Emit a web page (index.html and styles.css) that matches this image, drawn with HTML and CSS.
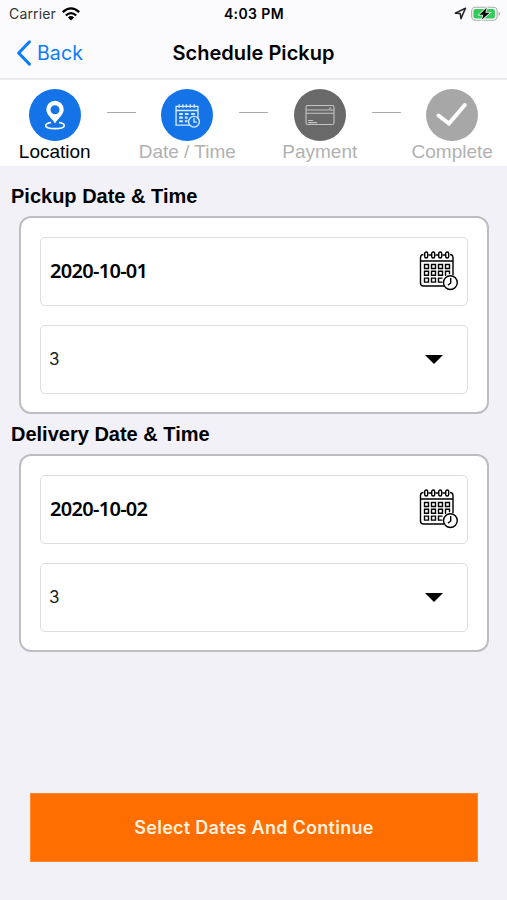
FILE: index.html
```html
<!DOCTYPE html>
<html lang="en">
<head>
<meta charset="utf-8">
<title>Schedule Pickup</title>
<link rel="stylesheet" href="styles.css">
</head>
<body>
<svg width="0" height="0" class="defs" aria-hidden="true">
  <symbol id="calendar" viewBox="0 0 40 40">
    <g fill="none" stroke="currentColor" stroke-width="1.4">
      <path d="M25 35H4.5Q1.5 35 1.5 32V6.5Q1.5 3.5 4.5 3.5M31 3.5Q34 3.5 34 6.5V24M1.5 10H34M9.5 4H12M16.5 4H19M23.5 4H26"/>
      <rect x="5.7" y="1" width="3" height="6" rx="1.5"/><rect x="12.7" y="1" width="3" height="6" rx="1.5"/><rect x="19.7" y="1" width="3" height="6" rx="1.5"/><rect x="26.7" y="1" width="3" height="6" rx="1.5"/>
      <path d="M5.5 13.5h4v4h-4zM12.5 13.5h4v4h-4zM19.5 13.5h4v4h-4zM26.5 13.5h4v4h-4zM5.5 20.3h4v4h-4zM12.5 20.3h4v4h-4zM19.5 20.3h4v4h-4zM26 24.3h.5v-4h4v3M5.5 27.1h4v4h-4zM12.5 27.1h4v4h-4zM23.5 31.1h-4v-4h4"/>
      <circle cx="31.4" cy="31.6" r="6.9"/><path d="M31.7 27v5l-2.8 2.3"/>
    </g>
  </symbol>
</svg>
<header class="header">
  <div class="status">
    <div class="status-left"><span class="carrier">Carrier</span>
      <svg class="wifi" viewBox="0 0 18 14"><g fill="none" stroke="#000" stroke-width="2.3"><path d="M.8 5.2Q9-2.4 17.2 5.2"/><path d="M3.8 8.5Q9 3.8 14.2 8.5"/></g><path d="M5.9 10.4Q9 7.8 12.1 10.4L9 13.5z"/></svg>
    </div>
    <span class="clock">4:03 PM</span>
    <div class="status-right">
      <svg class="arrow" viewBox="0 0 12 12"><path d="M1.2 5.7L10.6 1.2 6.4 10.7 5.8 6.1z" fill="none" stroke="#222" stroke-width="1.4" stroke-linejoin="round"/></svg>
      <svg class="battery" viewBox="0 0 30 16"><rect x=".7" y="1.2" width="25.4" height="13" rx="3.8" fill="#fff" stroke="#aaa" stroke-width="1.1"/><rect x="2.4" y="2.9" width="21.5" height="9.6" rx="2" fill="#35cb5a"/><path d="M27.6 5.4q3 2.3 0 4.6z" fill="#aaa"/><path d="M15.6 1.8L8.4 8.7h3.9L11 13.6 18.6 6.7h-4.2z" fill="#000" stroke="#e8f8ec" stroke-width="1.6" paint-order="stroke"/></svg>
    </div>
  </div>
  <nav class="nav">
    <a class="back"><svg class="chevron" viewBox="0 0 16 26"><path d="M13.3 2L2.7 13l10.6 11" fill="none" stroke="#0a7cff" stroke-width="3.2" stroke-linecap="round" stroke-linejoin="round"/></svg><span>Back</span></a>
    <h1 class="title">Schedule Pickup</h1>
  </nav>
</header>
<section class="steps">
  <div class="step current"><div class="disc blue"><svg viewBox="0 0 52 52"><path fill="#fff" fill-rule="evenodd" d="M26 11.8a8.7 8.7 0 0 0-8.7 8.7C17.3 26 24 30.3 26 34.5c2-4.2 8.7-8.5 8.7-14A8.7 8.7 0 0 0 26 11.8zM26 16.3a4.5 4.5 0 1 1 0 9 4.5 4.5 0 0 1 0-9z"/><path d="M22 33.5c-3 .5-5.3 1.5-5.3 3 0 4.2 18.6 4.2 18.6 0 0-1.5-2.3-2.5-5.3-3" fill="none" stroke="#fff" stroke-width="1.7"/></svg></div><span class="label">Location</span></div>
  <i class="link"></i>
  <div class="step"><div class="disc blue"><svg class="mini" viewBox="0 0 24 24"><g fill="none" stroke="#d8ebff" stroke-width="1.3"><path d="M14 21.2H1V3.2H22V15M1 7.2H22M4 1.2V4.5M7.5 1.2V4.5M11 1.2V4.5M14.7 1.2V4.5M18.5 1.2V4.5"/><path d="M4 10.5H7.5M9.5 10.5H13M15.5 10.5H19M4 14H7.5M9.5 14H12M4 17.5H7.5M9.5 17.5H12" stroke-width="2"/><circle cx="18.2" cy="18" r="5.2"/><path d="M18.2 14.5V18.3H21"/></g></svg></div><span class="label">Date / Time</span></div>
  <i class="link"></i>
  <div class="step"><div class="disc dark"><svg viewBox="0 0 52 52"><g fill="none" stroke="#c4c4c4" stroke-width="1.1"><rect x="12" y="16.5" width="28" height="19" rx="1.8"/><path d="M12 21H40M12 24.3H40M14 31.5h5M14 33.6h9M35 19.8l2-1"/></g></svg></div><span class="label">Payment</span></div>
  <i class="link"></i>
  <div class="step"><div class="disc light"><svg viewBox="0 0 52 52"><path d="M12.5 26.5L23 34.5 38.8 16" fill="none" stroke="#fff" stroke-width="4" stroke-linecap="round"/></svg></div><span class="label">Complete</span></div>
</section>
<main class="content">
  <h2 class="heading">Pickup Date &amp; Time</h2>
  <section class="card">
    <div class="field"><span class="date">2020-10-01</span><svg class="calendar"><use href="#calendar"/></svg></div>
    <div class="field select"><span class="value">3</span><i class="caret"></i></div>
  </section>
  <h2 class="heading delivery">Delivery Date &amp; Time</h2>
  <section class="card">
    <div class="field"><span class="date">2020-10-02</span><svg class="calendar"><use href="#calendar"/></svg></div>
    <div class="field select"><span class="value">3</span><i class="caret"></i></div>
  </section>
  <button class="continue">Select Dates And Continue</button>
</main>
</body>
</html>
```
FILE: styles.css
```css
* { box-sizing: border-box; }
body { margin: 0; width: 507px; height: 900px; overflow: hidden; background: #f2f1f7; color: #000; font-family: Inter, sans-serif; display: flex; flex-direction: column; }
svg { display: block; flex: none; }
.defs { position: absolute; }
.header { height: 80px; background: #fbfbfd; border-bottom: 2px solid #ececef; }
.status { height: 27px; display: grid; grid-template-columns: 1fr auto 1fr; align-items: center; padding: 0 6px 0 8px; }
.status-left, .status-right { display: flex; align-items: center; }
.status-left { gap: 6px; padding-left: 1px; }
.carrier { font-size: 14px; line-height: 20px; letter-spacing: .15px; color: #333; }
.wifi { width: 18px; height: 14px; }
.clock { font-size: 14px; font-weight: 600; line-height: 20px; letter-spacing: .4px; margin-right: 1px; }
.status-right { justify-content: flex-end; gap: 4px; }
.arrow { width: 13px; height: 13px; }
.battery { width: 30px; height: 16px; }
.nav { height: 51px; display: grid; grid-template-columns: 1fr auto 1fr; align-items: center; padding: 0 16px; }
.back { display: flex; align-items: center; gap: 5px; color: #0a7cff; font-size: 19.5px; letter-spacing: .1px; }
.chevron { width: 16px; height: 26px; }
.title { margin: 0; font-size: 20px; font-weight: 600; letter-spacing: .05px; }
.steps { height: 86px; background: #fff; display: flex; padding: 9px 2px 0; }
.step { width: 105.5px; flex: none; display: flex; flex-direction: column; align-items: center; color: #b1b1b1; }
.current { color: #000; }
.disc { width: 52px; height: 52px; border-radius: 50%; display: flex; align-items: center; justify-content: center; }
.disc svg { width: 52px; height: 52px; }
.disc .mini { width: 25px; height: 25px; }
.blue { background: #1473e6; }
.dark { background: #696969; }
.light { background: #a7a7a7; }
.label { font: 19px/22px "Liberation Sans", sans-serif; white-space: nowrap; }
.link { flex: none; width: 29px; height: 1px; margin: 23px -1px 0; background: #aaa; }
.content { display: flex; flex-direction: column; padding: 18px 18px 0 19px; }
.heading { margin: 0 0 8px -8px; font: bold 20px/24px "Liberation Sans", sans-serif; white-space: nowrap; }
.delivery { margin-top: 8px; }
.card { height: 198px; padding: 18.5px 19px; background: #fff; border: 2px solid #bebec2; border-radius: 12px; display: flex; flex-direction: column; gap: 19px; }
.field { height: 69px; border: 1.5px solid #dedee0; border-radius: 5px; display: flex; align-items: center; justify-content: space-between; padding: 0 8px 0 9px; }
.date { font: 600 20px/28px "Noto Sans", sans-serif; letter-spacing: -.7px; }
.calendar { width: 40px; height: 40px; }
.select { padding: 0 24px 0 8px; }
.value { font-size: 17px; color: #222; }
.caret { border: 9px solid transparent; border-top-color: #000; border-bottom: 0; }
.continue { margin: 141px 11px 0; height: 69px; border: 1px solid #ff8a2f; background: #ff6e00; color: #fff1df; font: 600 18px Inter, sans-serif; letter-spacing: .28px; }
```
